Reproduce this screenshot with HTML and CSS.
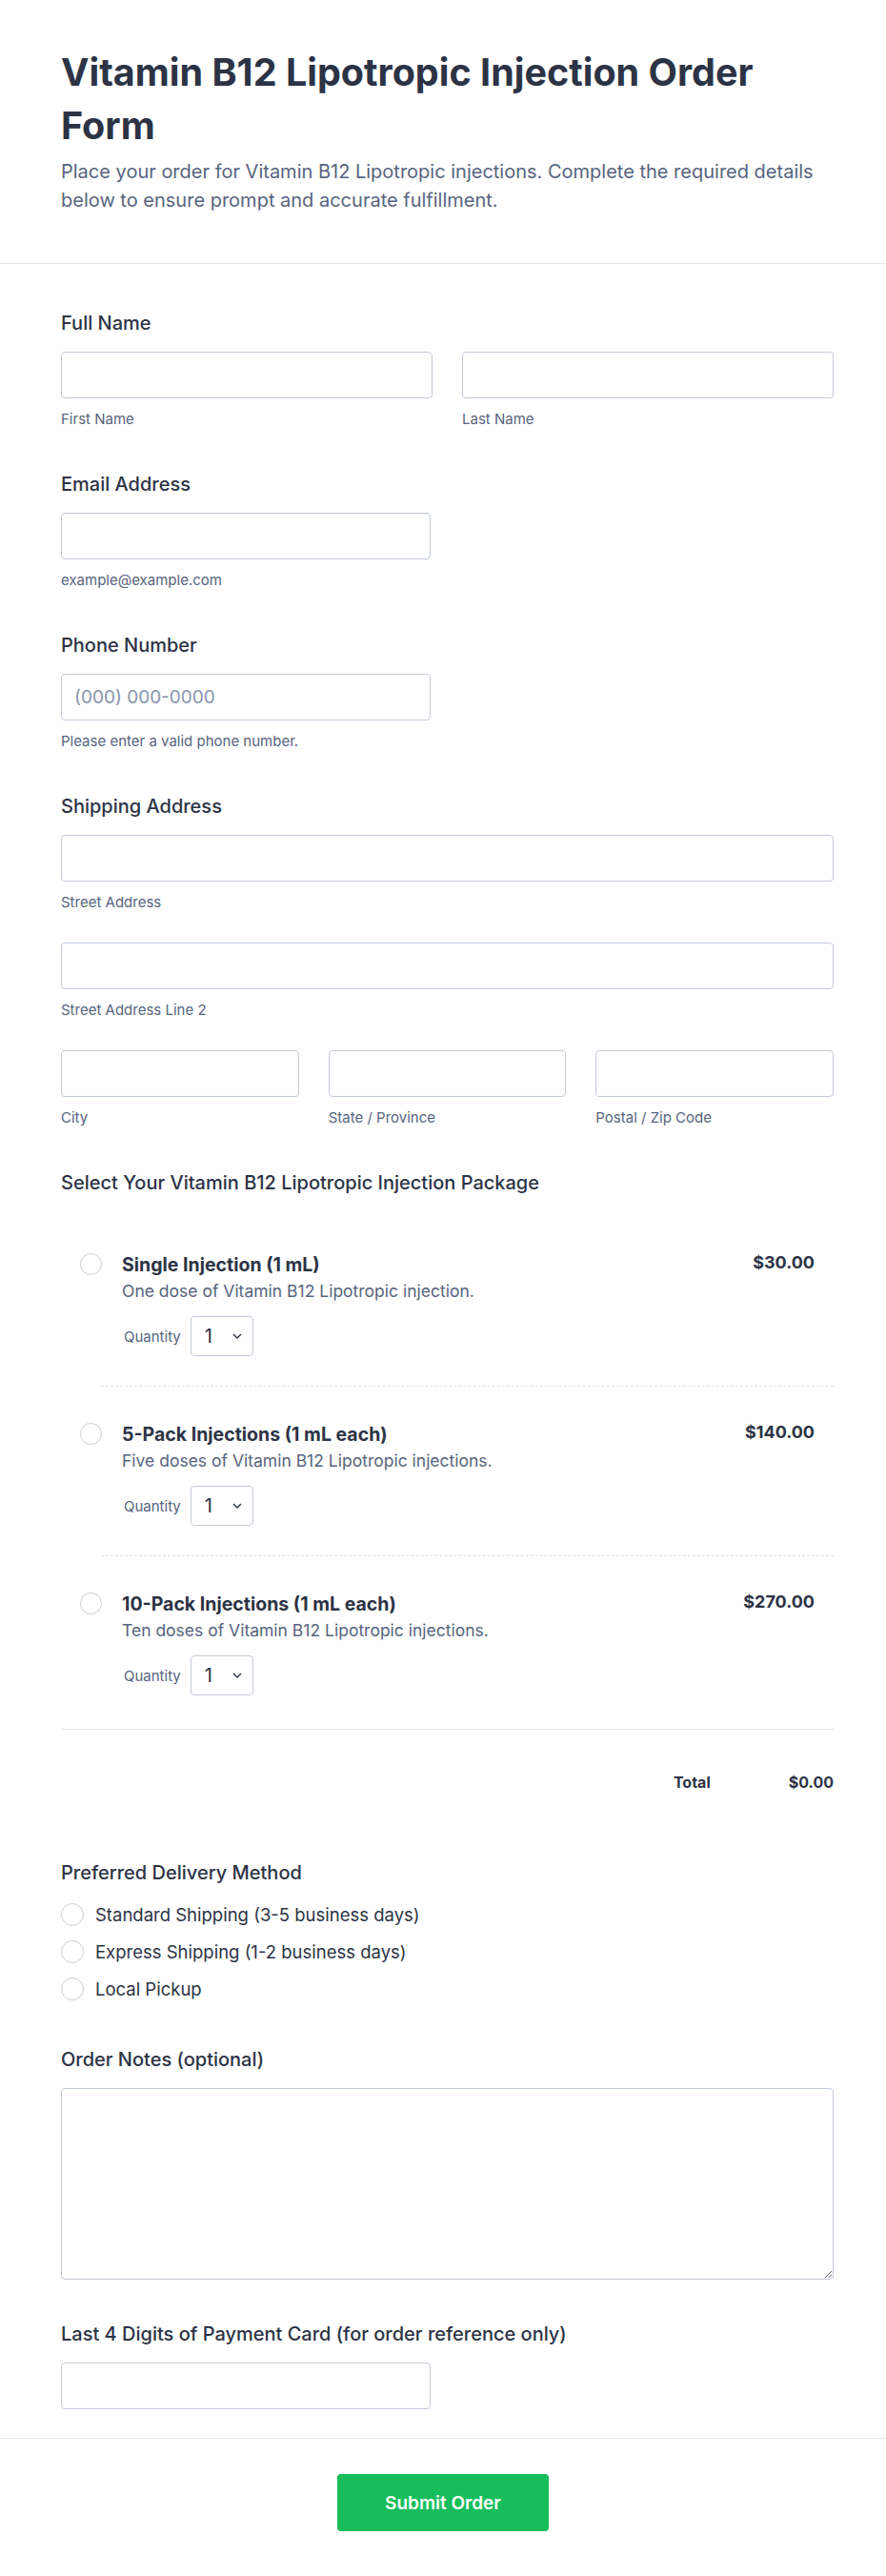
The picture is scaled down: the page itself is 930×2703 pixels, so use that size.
FILE: index.html
```html
<!DOCTYPE html>
<html lang="en">

<head>
    <meta charset="UTF-8">
    <title>Vitamin B12 Lipotropic Injection Order Form</title>
    <link rel="stylesheet" href="styles.css">
</head>

<body class="page">
    <header class="form_header">
        <h1 class="form_header__title">Vitamin B12 Lipotropic Injection Order Form</h1>
        <p class="form_header__desc">Place your order for Vitamin B12 Lipotropic injections. Complete the required details below to ensure prompt and accurate fulfillment.</p>
    </header>

    <form class="form_body" onsubmit="return false">
        <div class="field">
            <label class="field__label">Full Name</label>
            <div class="field__row">
                <div class="field__col">
                    <input type="text" class="input">
                    <span class="sublabel">First Name</span>
                </div>
                <div class="field__col">
                    <input type="text" class="input">
                    <span class="sublabel">Last Name</span>
                </div>
            </div>
        </div>

        <div class="field">
            <label class="field__label">Email Address</label>
            <div class="field__half">
                <input type="email" class="input">
                <span class="sublabel">example@example.com</span>
            </div>
        </div>

        <div class="field">
            <label class="field__label">Phone Number</label>
            <div class="field__half">
                <input type="tel" class="input" placeholder="(000) 000-0000">
                <span class="sublabel">Please enter a valid phone number.</span>
            </div>
        </div>

        <div class="field">
            <label class="field__label">Shipping Address</label>
            <div class="address">
                <div class="field__col">
                    <input type="text" class="input">
                    <span class="sublabel">Street Address</span>
                </div>
                <div class="field__col">
                    <input type="text" class="input">
                    <span class="sublabel">Street Address Line 2</span>
                </div>
                <div class="field__row">
                    <div class="field__col">
                        <input type="text" class="input">
                        <span class="sublabel">City</span>
                    </div>
                    <div class="field__col">
                        <input type="text" class="input">
                        <span class="sublabel">State / Province</span>
                    </div>
                    <div class="field__col">
                        <input type="text" class="input">
                        <span class="sublabel">Postal / Zip Code</span>
                    </div>
                </div>
            </div>
        </div>

        <div class="field field--products">
            <label class="field__label">Select Your Vitamin B12 Lipotropic Injection Package</label>
            <div class="products">
                <div class="product">
                    <span class="radio product__radio"></span>
                    <div class="product__body">
                        <div class="product__name">Single Injection (1 mL)</div>
                        <div class="product__desc">One dose of Vitamin B12 Lipotropic injection.</div>
                        <div class="product__qty">
                            <span class="product__qty_label">Quantity</span>
                            <div class="select">
                                <span>1</span>
                                <svg width="10" height="6" viewBox="0 0 10 6"><path d="M1 1l4 4 4-4" fill="none" stroke="#2c3345" stroke-width="1.4"/></svg>
                            </div>
                        </div>
                    </div>
                    <div class="product__price">$30.00</div>
                </div>
                <div class="product_sep"></div>
                <div class="product">
                    <span class="radio product__radio"></span>
                    <div class="product__body">
                        <div class="product__name">5-Pack Injections (1 mL each)</div>
                        <div class="product__desc">Five doses of Vitamin B12 Lipotropic injections.</div>
                        <div class="product__qty">
                            <span class="product__qty_label">Quantity</span>
                            <div class="select">
                                <span>1</span>
                                <svg width="10" height="6" viewBox="0 0 10 6"><path d="M1 1l4 4 4-4" fill="none" stroke="#2c3345" stroke-width="1.4"/></svg>
                            </div>
                        </div>
                    </div>
                    <div class="product__price">$140.00</div>
                </div>
                <div class="product_sep"></div>
                <div class="product">
                    <span class="radio product__radio"></span>
                    <div class="product__body">
                        <div class="product__name">10-Pack Injections (1 mL each)</div>
                        <div class="product__desc">Ten doses of Vitamin B12 Lipotropic injections.</div>
                        <div class="product__qty">
                            <span class="product__qty_label">Quantity</span>
                            <div class="select">
                                <span>1</span>
                                <svg width="10" height="6" viewBox="0 0 10 6"><path d="M1 1l4 4 4-4" fill="none" stroke="#2c3345" stroke-width="1.4"/></svg>
                            </div>
                        </div>
                    </div>
                    <div class="product__price">$270.00</div>
                </div>
            </div>
            <div class="total">
                <span>Total</span>
                <span>$0.00</span>
            </div>
        </div>

        <div class="field field--delivery">
            <label class="field__label">Preferred Delivery Method</label>
            <div class="options">
                <label class="option"><span class="radio"></span>Standard Shipping (3-5 business days)</label>
                <label class="option"><span class="radio"></span>Express Shipping (1-2 business days)</label>
                <label class="option"><span class="radio"></span>Local Pickup</label>
            </div>
        </div>

        <div class="field field--notes">
            <label class="field__label">Order Notes (optional)</label>
            <textarea class="input textarea"></textarea>
        </div>

        <div class="field field--last">
            <label class="field__label">Last 4 Digits of Payment Card (for order reference only)</label>
            <div class="field__half">
                <input type="text" class="input">
            </div>
        </div>
    </form>

    <footer class="form_footer">
        <button type="button" class="submit">Submit Order</button>
    </footer>
</body>

</html>
```

FILE: styles.css
```css
.page {
    margin: 0;
    background: #fff;
    color: #2c3345;
    font-family: Inter, "Noto Sans", sans-serif;
}

.form_header {
    padding: 48px 55px 51px 64px;
    border-bottom: 1px solid #e3e5ec;
}
.form_header__title {
    margin: 0;
    font-size: 39.5px;
    line-height: 56px;
    font-weight: 700;
    color: #2c3345;
}
.form_header__desc {
    margin: 5px 0 0;
    font-size: 20px;
    line-height: 30px;
    color: #57647e;
}

.form_body {
    padding: 49px 55px 30px 64px;
    border-bottom: 1px solid #e3e5ec;
}

.field {
    margin-bottom: 45px;
}
.field__label {
    display: block;
    margin-bottom: 16px;
    font-size: 20px;
    line-height: 27px;
    font-weight: 500;
}
.field__row {
    display: flex;
    gap: 31px;
}
.field__col {
    flex: 1;
    display: flex;
    flex-direction: column;
}
.field__half {
    width: 388px;
    display: flex;
    flex-direction: column;
}
.address {
    display: flex;
    flex-direction: column;
    gap: 32px;
}

.input {
    box-sizing: border-box;
    width: 100%;
    height: 49px;
    padding: 0 13px;
    border: 1px solid #c3cad8;
    border-radius: 4px;
    font-family: inherit;
    font-size: 19px;
    color: #2c3345;
    background: #fff;
}
.input::placeholder {
    color: #8894ab;
}
.sublabel {
    margin-top: 12px;
    font-size: 15px;
    line-height: 20px;
    color: #57647e;
}

.radio {
    box-sizing: border-box;
    flex: none;
    width: 24px;
    height: 24px;
    border: 1.5px solid #c8cdd6;
    border-radius: 50%;
    background: #fff;
}

/* products */
.products {
    margin-top: 22px;
}
.product {
    display: flex;
    align-items: flex-start;
    padding: 36px 20px 31px;
}
.product__radio {
    margin-top: 2px;
    width: 23px;
    height: 23px;
}
.product__body {
    flex: 1;
    margin-left: 21px;
}
.product__name {
    font-size: 19.5px;
    line-height: 28px;
    font-weight: 700;
    margin-bottom: 2px;
}
.product__desc {
    font-size: 17.5px;
    line-height: 24px;
    color: #57647e;
}
.product__qty {
    display: flex;
    align-items: center;
    gap: 10px;
    margin-top: 14px;
}
.product__qty_label {
    font-size: 15px;
    color: #57647e;
    margin-left: 2px;
}
.select {
    box-sizing: border-box;
    width: 66px;
    height: 42px;
    padding: 0 11px 0 14px;
    display: flex;
    align-items: center;
    justify-content: space-between;
    border: 1px solid #c3cad8;
    border-radius: 4px;
    font-size: 20px;
}
.product__price {
    font-size: 18px;
    line-height: 24px;
    font-weight: 700;
}
.product_sep {
    margin-left: 42px;
    border-top: 1px dashed #dde1e8;
}
.total {
    display: flex;
    justify-content: flex-end;
    gap: 82px;
    margin-top: 4px;
    padding: 43px 0 25px;
    border-top: 1px solid #e3e5ec;
    font-size: 16px;
    line-height: 24px;
    font-weight: 700;
}

/* delivery */
.options {
    display: flex;
    flex-direction: column;
    gap: 15px;
    margin-top: 18px;
}
.option {
    display: flex;
    align-items: center;
    gap: 12px;
    font-size: 18.5px;
    line-height: 24px;
}
.field--delivery {
    margin-bottom: 49px;
}
.field--delivery .field__label {
    margin-bottom: 0;
}

.textarea {
    display: block;
    height: 201px;
    padding: 12px 13px;
    resize: vertical;
}
.field--notes {
    margin-bottom: 44px;
}
.field--last {
    margin-bottom: 0;
}

.form_footer {
    padding: 37px 0 49px;
    display: flex;
    justify-content: center;
}
.submit {
    width: 222px;
    height: 60px;
    border: none;
    border-radius: 4px;
    background: #18bd5b;
    color: #fff;
    font-family: inherit;
    font-size: 19px;
    font-weight: 600;
}
```
